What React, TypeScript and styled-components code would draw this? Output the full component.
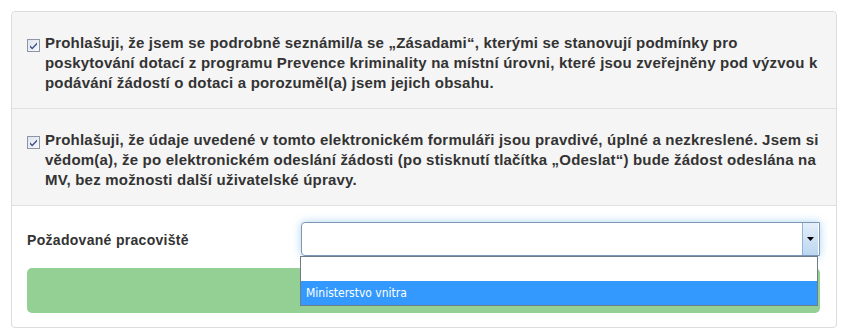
import React from "react";
import styled, { createGlobalStyle } from "styled-components";

const Global = createGlobalStyle`
  html, body { margin: 0; padding: 0; background: #fff; }
  body { font-family: "Liberation Sans", Arial, sans-serif; color: #333; }
`;

const Page = styled.div`
  padding: 11px 0 0 11px;
`;

const Panel = styled.div`
  width: 824px;
  border: 1px solid #dcdcdc;
  border-radius: 4px;
  background: #fff;
`;

const CheckRow = styled.div<{ first?: boolean }>`
  background: #f5f5f5;
  border-bottom: 1px solid #e1e1e1;
  padding: 21px 13px 15px 15px;
  border-radius: ${(p) => (p.first ? "4px 4px 0 0" : "0")};
`;

const CheckLabel = styled.label`
  display: flex;
  align-items: flex-start;
  gap: 5px;
  font-size: 15px;
  letter-spacing: 0.2px;
  line-height: 20px;
  font-weight: bold;
  color: #333;
`;

const Box = styled.span`
  flex: none;
  width: 13px;
  height: 13px;
  margin-top: 4px;
  display: block;
`;

const FormRow = styled.div`
  padding: 16px 16px 14px 15px;
  display: flex;
  flex-direction: column;
  gap: 12px;
`;

const FieldLine = styled.div`
  display: flex;
  align-items: center;
`;

const FieldLabel = styled.div`
  width: 274px;
  font-size: 14px;
  letter-spacing: 0.3px;
  font-weight: bold;
  color: #333;
  padding-top: 2px;
`;

const SelectWrap = styled.div`
  position: relative;
  flex: 1;
`;

const SelectBox = styled.div`
  height: 32px;
  border: 1px solid #7d98b6;
  border-radius: 4px 0 0 4px;
  background: #fff;
  box-shadow: 0 0 8px rgba(102, 175, 233, 0.55);
  display: flex;
  justify-content: flex-end;
  padding: 0 1px 0 0;
`;

const ArrowBtn = styled.div`
  width: 15px;
  border-left: 1px solid #8fb4dc;
  background: linear-gradient(#e4effa, #bcd6f0);
  display: flex;
  align-items: center;
  justify-content: center;
`;

const DropList = styled.div`
  position: absolute;
  left: -1px;
  right: 2px;
  top: 34px;
  border: 1px solid #6e7c8a;
  background: #fff;
  z-index: 2;
`;

const Option = styled.div<{ selected?: boolean }>`
  height: 24px;
  line-height: 24px;
  padding-left: 5px;
  font-family: "DejaVu Sans Condensed", "DejaVu Sans", sans-serif;
  font-size: 12px;
  background: ${(p) => (p.selected ? "#3399ff" : "#fff")};
  color: ${(p) => (p.selected ? "#fff" : "#000")};
`;

const SubmitButton = styled.div`
  height: 45px;
  background: #94cf94;
  border-radius: 5px;
`;

const CheckIcon = () => (
  <Box>
    <svg width="13" height="13" viewBox="0 0 13 13">
      <defs>
        <linearGradient id="cbg" x1="0" y1="0" x2="1" y2="1">
          <stop offset="0" stopColor="#dfe4ee" />
          <stop offset="1" stopColor="#f7f8fb" />
        </linearGradient>
      </defs>
      <rect x="0.5" y="0.5" width="12" height="12" fill="url(#cbg)" stroke="#8e95a5" />
      <path d="M3 6.2 L5.2 8.6 L10 3.4 L10 5.4 L5.2 10.6 L3 8.2 Z" fill="#3c4f8c" />
    </svg>
  </Box>
);

export default function App() {
  return (
    <Page>
      <Global />
      <Panel>
        <CheckRow first>
          <CheckLabel>
            <CheckIcon />
            <span>
              Prohlašuji, že jsem se podrobně seznámil/a se „Zásadami“, kterými se stanovují podmínky pro
              poskytování dotací z programu Prevence kriminality na místní úrovni, které jsou zveřejněny pod výzvou k
              podávání žádostí o dotaci a porozuměl(a) jsem jejich obsahu.
            </span>
          </CheckLabel>
        </CheckRow>
        <CheckRow>
          <CheckLabel>
            <CheckIcon />
            <span>
              Prohlašuji, že údaje uvedené v tomto elektronickém formuláři jsou pravdivé, úplné a nezkreslené. Jsem si
              vědom(a), že po elektronickém odeslání žádosti (po stisknutí tlačítka „Odeslat“) bude žádost odeslána na
              MV, bez možnosti další uživatelské úpravy.
            </span>
          </CheckLabel>
        </CheckRow>
        <FormRow>
          <FieldLine>
            <FieldLabel>Požadované pracoviště</FieldLabel>
            <SelectWrap>
              <SelectBox>
                <ArrowBtn>
                  <svg width="7" height="4" viewBox="0 0 7 4">
                    <path d="M0 0 H7 L3.5 4 Z" fill="#000" />
                  </svg>
                </ArrowBtn>
              </SelectBox>
              <DropList>
                <Option />
                <Option selected>Ministerstvo vnitra</Option>
              </DropList>
            </SelectWrap>
          </FieldLine>
          <SubmitButton />
        </FormRow>
      </Panel>
    </Page>
  );
}
